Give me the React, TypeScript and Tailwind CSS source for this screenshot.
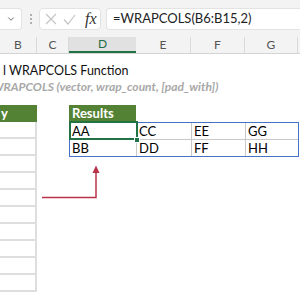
import { ChevronDown } from "lucide-react";

const FONT = { fontFamily: "Lato, 'Liberation Sans', sans-serif" };

const headers = [
  { key: "B", w: "w-[37px]" },
  { key: "C", w: "w-[32px]" },
  { key: "D", w: "w-[67px]", active: true },
  { key: "E", w: "w-[55px]" },
  { key: "F", w: "w-[54px]" },
  { key: "G", w: "w-[53px]" },
];

const rows = [
  ["AA", "CC", "EE", "GG"],
  ["BB", "DD", "FF", "HH"],
];

const cellW = ["w-[67px]", "w-[55px]", "w-[54px]", "w-[52px]"];

export default function App() {
  return (
    <div className="relative w-[300px] h-[300px] overflow-hidden bg-white" style={FONT}>
      {/* formula bar */}
      <div className="h-[37px] bg-[#f3f3f3] flex items-start pt-[8px]">
        <div className="w-[22px] h-[22px] bg-white border border-l-0 border-[#e3e3e3] rounded-r-[4px] flex items-center justify-end pr-[5px]">
          <ChevronDown className="w-[10px] h-[10px] text-[#555]" strokeWidth={2} />
        </div>
        <div className="ml-[8px] h-[22px] flex flex-col items-center justify-center gap-[2px]">
          <span className="block w-[2px] h-[2px] rounded-full bg-[#9a9a9a]" />
          <span className="block w-[2px] h-[2px] rounded-full bg-[#9a9a9a]" />
          <span className="block w-[2px] h-[2px] rounded-full bg-[#9a9a9a]" />
        </div>
        <div className="ml-[7px] w-[62px] h-[22px] bg-white border border-[#e3e3e3] rounded-[4px] flex items-center">
          <svg className="ml-[5px]" width="12" height="12" viewBox="0 0 12 12">
            <path d="M1 1 L11 11 M11 1 L1 11" stroke="#c4c4c4" strokeWidth="1.2" fill="none" />
          </svg>
          <svg className="ml-[6px]" width="13" height="11" viewBox="0 0 13 11">
            <path d="M1 5.5 L5 10 L12 1" stroke="#c4c4c4" strokeWidth="1.2" fill="none" />
          </svg>
          <span
            className="ml-[9px] text-[16px] italic text-[#333] leading-none"
            style={{ fontFamily: "'Liberation Serif', serif" }}
          >
            fx
          </span>
        </div>
        <div className="ml-[5px] flex-1 h-[22px] bg-white border border-r-0 border-[#e3e3e3] rounded-l-[4px] flex items-center pl-[6px] text-[13px] text-[#222]">
          =WRAPCOLS(B6:B15,2)
        </div>
      </div>

      {/* column headers */}
      <div className="h-[17px] flex bg-[#f3f3f3] border-b border-[#d4d4d4]">
        {headers.map((h) => (
          <div
            key={h.key}
            className={`${h.w} flex items-center justify-center text-[12px] ${
              h.active
                ? "bg-[#e1e1e1] text-[#1f6e43] border-b-2 border-[#217346]"
                : "text-[#555] border-r border-[#dadada]"
            }`}
          >
            {h.key}
          </div>
        ))}
      </div>

      {/* title */}
      <div className="pt-[10px] pl-[3px]">
        <div className="h-[16px] leading-[14px] text-[12.5px] text-[#111] whitespace-nowrap">l WRAPCOLS Function</div>
        <div className="h-[14px] leading-[14px] text-[12px] -ml-[11px] italic font-bold text-[#a8a8a8] whitespace-nowrap">
          WRAPCOLS (vector, wrap_count, [pad_with])
        </div>
      </div>

      {/* tables */}
      <div className="mt-[11px] flex items-start text-[13px]">
        <div className="w-[37px]">
          <div className="h-[17px] bg-[#548235] text-white font-bold leading-[17px] pl-[1px] border-r-2 border-[#548235]">
            y
          </div>
          {Array.from({ length: 10 }, (_, i) => (
            <div key={i} className="h-[17px] bg-white border-b-2 border-r-2 border-[#dedede]" />
          ))}
        </div>

        <div className="ml-[32px] w-[230px]">
          <div className="w-[67px] h-[17px] bg-[#548235] text-white font-bold leading-[17px] pl-[3px]">
            Results
          </div>
          <div className="relative border border-[#4472c4]">
            {rows.map((r, ri) => (
              <div key={ri} className={`flex ${ri === 0 ? "h-[17px] border-b border-[#c8c8c8]" : "h-[16px]"}`}>
                {r.map((v, ci) => (
                  <div
                    key={ci}
                    className={`${cellW[ci]} pl-[2px] leading-[16px] text-black ${
                      ci < 3 ? "border-r border-[#c8c8c8]" : ""
                    }`}
                  >
                    {v}
                  </div>
                ))}
              </div>
            ))}
            <div className="absolute left-[-1px] top-[-2px] w-[69px] h-[19px] border-2 border-[#217346]" />
            <div className="absolute left-[64px] top-[14px] w-[6px] h-[6px] bg-[#217346] border border-white" />
          </div>
        </div>
      </div>

      {/* arrow */}
      <svg className="absolute left-0 top-0 pointer-events-none" width="300" height="300" viewBox="0 0 300 300">
        <path d="M42 197.5 H96 V172" stroke="#b8334a" strokeWidth="1.5" fill="none" />
        <path d="M92.5 173 L96 165.5 L99.5 173 Z" fill="#b8334a" />
      </svg>
    </div>
  );
}
